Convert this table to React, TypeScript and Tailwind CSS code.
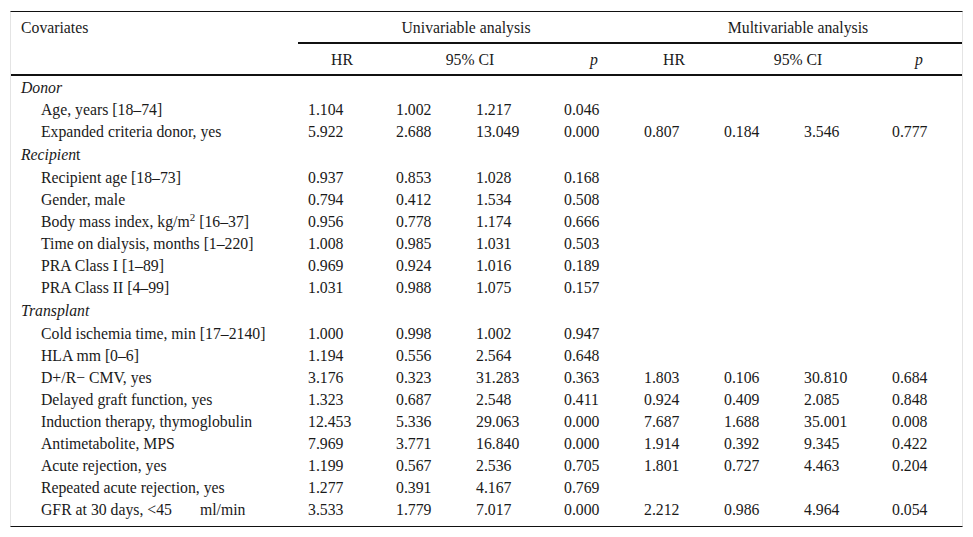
import type { ReactNode } from 'react'

type Row = {
  label: ReactNode
  uni: string[]
  multi?: string[]
}

type Section = {
  title: ReactNode
  rows: Row[]
}

const SECTIONS: Section[] = [
  {
    title: 'Donor',
    rows: [
      { label: 'Age, years [18–74]', uni: ['1.104', '1.002', '1.217', '0.046'] },
      {
        label: 'Expanded criteria donor, yes',
        uni: ['5.922', '2.688', '13.049', '0.000'],
        multi: ['0.807', '0.184', '3.546', '0.777'],
      },
    ],
  },
  {
    title: (
      <>
        Recipien<span className="not-italic">t</span>
      </>
    ),
    rows: [
      { label: 'Recipient age [18–73]', uni: ['0.937', '0.853', '1.028', '0.168'] },
      { label: 'Gender, male', uni: ['0.794', '0.412', '1.534', '0.508'] },
      {
        label: (
          <>
            Body mass index, kg/m<sup className="text-[11px] -top-[6px]">2</sup> [16–37]
          </>
        ),
        uni: ['0.956', '0.778', '1.174', '0.666'],
      },
      { label: 'Time on dialysis, months [1–220]', uni: ['1.008', '0.985', '1.031', '0.503'] },
      { label: 'PRA Class I [1–89]', uni: ['0.969', '0.924', '1.016', '0.189'] },
      { label: 'PRA Class II [4–99]', uni: ['1.031', '0.988', '1.075', '0.157'] },
    ],
  },
  {
    title: 'Transplant',
    rows: [
      { label: 'Cold ischemia time, min [17–2140]', uni: ['1.000', '0.998', '1.002', '0.947'] },
      { label: 'HLA mm [0–6]', uni: ['1.194', '0.556', '2.564', '0.648'] },
      {
        label: 'D+/R− CMV, yes',
        uni: ['3.176', '0.323', '31.283', '0.363'],
        multi: ['1.803', '0.106', '30.810', '0.684'],
      },
      {
        label: 'Delayed graft function, yes',
        uni: ['1.323', '0.687', '2.548', '0.411'],
        multi: ['0.924', '0.409', '2.085', '0.848'],
      },
      {
        label: 'Induction therapy, thymoglobulin',
        uni: ['12.453', '5.336', '29.063', '0.000'],
        multi: ['7.687', '1.688', '35.001', '0.008'],
      },
      {
        label: 'Antimetabolite, MPS',
        uni: ['7.969', '3.771', '16.840', '0.000'],
        multi: ['1.914', '0.392', '9.345', '0.422'],
      },
      {
        label: 'Acute rejection, yes',
        uni: ['1.199', '0.567', '2.536', '0.705'],
        multi: ['1.801', '0.727', '4.463', '0.204'],
      },
      { label: 'Repeated acute rejection, yes', uni: ['1.277', '0.391', '4.167', '0.769'] },
      {
        label: (
          <>
            GFR at 30 days, &lt;45<span className="ml-[28px]">ml/min</span>
          </>
        ),
        uni: ['3.533', '1.779', '7.017', '0.000'],
        multi: ['2.212', '0.986', '4.964', '0.054'],
      },
    ],
  },
]

const COL_WIDTHS = [287, 88, 80, 88, 80, 80, 80, 88, 80]

export default function App() {
  return (
    <div className="pt-[11px] pl-[10px] bg-white min-h-screen">
      <div className="w-[953px] border border-[#e4e4e4] border-t-[#111] border-b-[#111] pb-[6px] text-[#1a1a1a] text-[15.75px] leading-none font-['Liberation_Serif','Times_New_Roman',serif]">
        <table className="table-fixed w-[951px] border-separate border-spacing-0">
          <colgroup>
            {COL_WIDTHS.map((w, i) => (
              <col key={i} style={{ width: w }} />
            ))}
          </colgroup>
          <thead>
            <tr className="h-[32px]">
              <th className="font-normal text-left pl-[10px] pt-[1px] pb-[1px] align-middle">Covariates</th>
              <th colSpan={4} className="font-normal text-center align-middle pt-[2px] border-b-2 border-[#111]">
                Univariable analysis
              </th>
              <th colSpan={4} className="font-normal text-center align-middle pt-[2px] border-b-2 border-[#111]">
                Multivariable analysis
              </th>
            </tr>
            <tr className="h-[32px]">
              <th className="border-b-2 border-[#111]" />
              <th className="font-normal text-center pt-[2px] border-b-2 border-[#111]">HR</th>
              <th colSpan={2} className="font-normal text-center pt-[2px] border-b-2 border-[#111]">95% CI</th>
              <th className="font-normal text-center italic pt-[2px] border-b-2 border-[#111]">p</th>
              <th className="font-normal text-center pt-[2px] border-b-2 border-[#111]">HR</th>
              <th colSpan={2} className="font-normal text-center pt-[2px] border-b-2 border-[#111]">95% CI</th>
              <th className="font-normal text-center italic pt-[2px] border-b-2 border-[#111] pr-[6px]">p</th>
            </tr>
          </thead>
          <tbody>
            {SECTIONS.map((section, si) => (
              <SectionRows key={si} section={section} first={si === 0} />
            ))}
          </tbody>
        </table>
      </div>
    </div>
  )
}

function SectionRows({ section, first }: { section: Section; first: boolean }) {
  return (
    <>
      <tr className={first ? 'h-[22px]' : 'h-[24px]'}>
        <td colSpan={9} className="italic pl-[10px] pt-[2px] align-middle">
          {section.title}
        </td>
      </tr>
      {section.rows.map((row, i) => (
        <tr key={i} className="h-[22px]">
          <td className="pl-[30px] pt-[2px] align-middle whitespace-nowrap">{row.label}</td>
          {row.uni.map((v, j) => (
            <td key={`u${j}`} className="pl-[10px] pt-[2px] align-middle">{v}</td>
          ))}
          {Array.from({ length: 4 }).map((_, j) => (
            <td key={`m${j}`} className="pl-[10px] pt-[2px] align-middle">
              {row.multi ? row.multi[j] : ''}
            </td>
          ))}
        </tr>
      ))}
    </>
  )
}
